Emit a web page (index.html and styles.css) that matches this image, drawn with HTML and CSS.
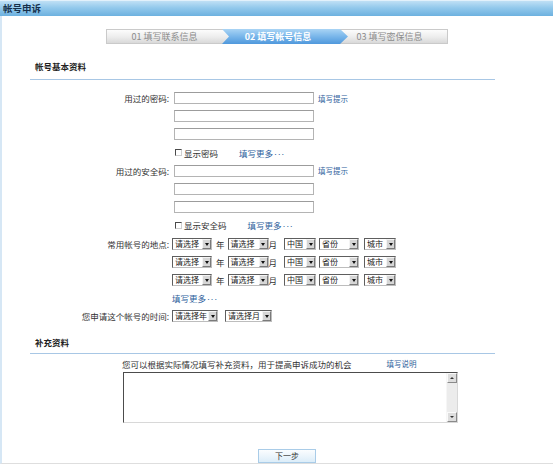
FILE: index.html
```html
<!DOCTYPE html>
<html lang="zh-CN">
<head>
<meta charset="utf-8">
<title>帐号申诉</title>
<link rel="stylesheet" href="styles.css">
</head>
<body>
<div class="page">
  <div class="hd">帐号申诉</div>
  <div class="main">
    <div class="steps">
      <div class="step s1">01 填写联系信息</div>
      <div class="step s2">02 填写帐号信息</div>
      <div class="step s3">03 填写密保信息</div>
    </div>

    <div class="sec">帐号基本资料</div>
    <div class="form">
      <div class="row"><span class="lbl">用过的密码:</span><span class="inp"></span><a class="tip">填写提示</a></div>
      <div class="row"><span class="lbl"></span><span class="inp"></span></div>
      <div class="row"><span class="lbl"></span><span class="inp"></span></div>
      <div class="row"><span class="lbl"></span><span class="chk"></span><span class="chk-text">显示密码</span><a class="more">填写更多<span class="dots">···</span></a></div>

      <div class="row"><span class="lbl">用过的安全码:</span><span class="inp"></span><a class="tip">填写提示</a></div>
      <div class="row"><span class="lbl"></span><span class="inp"></span></div>
      <div class="row"><span class="lbl"></span><span class="inp"></span></div>
      <div class="row"><span class="lbl"></span><span class="chk"></span><span class="chk-text">显示安全码</span><a class="more">填写更多<span class="dots">···</span></a></div>

      <div class="row"><span class="lbl">常用帐号的地点:</span>
        <span class="sel w40">请选择<i class="btn"></i></span><span class="unit u-year">年</span>
        <span class="sel w41">请选择<i class="btn"></i></span><span class="unit u-month">月</span>
        <span class="sel w32 g-country">中国<i class="btn"></i></span>
        <span class="sel w40 g-prov">省份<i class="btn"></i></span>
        <span class="sel w32 g-city">城市<i class="btn"></i></span>
      </div>
      <div class="row"><span class="lbl"></span>
        <span class="sel w40">请选择<i class="btn"></i></span><span class="unit u-year">年</span>
        <span class="sel w41">请选择<i class="btn"></i></span><span class="unit u-month">月</span>
        <span class="sel w32 g-country">中国<i class="btn"></i></span>
        <span class="sel w40 g-prov">省份<i class="btn"></i></span>
        <span class="sel w32 g-city">城市<i class="btn"></i></span>
      </div>
      <div class="row"><span class="lbl"></span>
        <span class="sel w40">请选择<i class="btn"></i></span><span class="unit u-year">年</span>
        <span class="sel w41">请选择<i class="btn"></i></span><span class="unit u-month">月</span>
        <span class="sel w32 g-country">中国<i class="btn"></i></span>
        <span class="sel w40 g-prov">省份<i class="btn"></i></span>
        <span class="sel w32 g-city">城市<i class="btn"></i></span>
      </div>
      <div class="row"><span class="lbl"></span><a class="more more-loc">填写更多<span class="dots">···</span></a></div>

      <div class="row"><span class="lbl">您申请这个帐号的时间:</span>
        <span class="sel w46">请选择年<i class="btn"></i></span>
        <span class="sel w47 g-tm">请选择月<i class="btn"></i></span>
      </div>
    </div>

    <div class="sec sec2">补充资料</div>
    <div class="supp">
      <div class="supp-line"><span>您可以根据实际情况填写补充资料，用于提高申诉成功的机会</span><a class="tip tip-supp">填写说明</a></div>
      <div class="ta">
        <textarea class="ta-input"></textarea>
        <div class="sb">
          <span class="sb-btn up"></span>
          <span class="sb-btn down"></span>
        </div>
      </div>
    </div>

    <div class="actions"><button class="next">下一步</button></div>
  </div>
</div>
</body>
</html>
```
FILE: styles.css
```css
html, body {
  margin: 0;
  padding: 0;
  background: #fff;
}
body {
  font-family: "Noto Sans CJK SC", "Noto Sans", sans-serif;
  font-size: 8.5px;
  color: #333;
}
.page {
  width: 553px;
  height: 465px;
  overflow: hidden;
  background: #fff;
}
.hd {
  height: 16px;
  box-sizing: border-box;
  border-top: 1px solid #e2f1fb;
  background: linear-gradient(#bfe0f5, #93c9ec 45%, #6db1df);
  font-weight: bold;
  font-size: 9.5px;
  line-height: 14px;
  padding-left: 3px;
  color: #16304b;
}
.main {
  height: 448px;
  box-sizing: border-box;
  border-left: 2px solid #d6e7f5;
  border-bottom: 1px solid #dedede;
  padding-top: 13px;
}

/* steps */
.steps {
  display: flex;
  width: 342px;
  height: 15px;
  margin-left: 104px;
  box-sizing: border-box;
  border: 1px solid #cacaca;
  background: linear-gradient(#fcfcfc, #ececec 55%, #d9d9d9);
  font-size: 9px;
  line-height: 13px;
  color: #8c8c8c;
  white-space: nowrap;
}
.step {
  text-align: center;
}
.s1 {
  flex: 0 0 115px;
}
.s2 {
  flex: 0 0 126px;
  margin: -1px -8px -1px 0;
  height: 15px;
  line-height: 15px;
  padding-right: 14px;
  box-sizing: border-box;
  position: relative;
  z-index: 1;
  background: linear-gradient(#a9d4f5, #79b6ea 50%, #4f98dc);
  color: #fff;
  font-weight: bold;
  clip-path: polygon(0 0, calc(100% - 8px) 0, 100% 50%, calc(100% - 8px) 100%, 0 100%, 7px 50%);
}
.s3 {
  flex: 1;
  padding-right: 8px;
}

/* sections */
.sec {
  margin: 15px 58px 0 28px;
  padding-left: 5px;
  line-height: 14px;
  padding-bottom: 6px;
  border-bottom: 1px solid #a8c7e5;
  font-weight: bold;
  color: #222;
}
.sec2 {
  margin-top: 9.5px;
  padding-bottom: 4px;
}

/* form */
.form {
  margin-top: 9px;
}
.row {
  display: flex;
  align-items: center;
  height: 18.2px;
  white-space: nowrap;
}
.lbl {
  flex: 0 0 170px;
  box-sizing: border-box;
  padding-right: 3px;
  text-align: right;
  color: #333;
}
.inp {
  display: block;
  width: 140px;
  height: 12px;
  box-sizing: border-box;
  margin-left: 2px;
  border: 1px solid #b4b4b4;
  border-top-color: #9c9c9c;
  background: #fff;
}
a {
  color: #2d5e9b;
  text-decoration: none;
}
.tip {
  margin-left: 4px;
  font-size: 7.5px;
}
.chk {
  display: block;
  width: 7px;
  height: 7px;
  box-sizing: border-box;
  margin-left: 3px;
  border: 1px solid;
  border-color: #4a4a4a #d0d0d0 #d0d0d0 #4a4a4a;
  background: #fff;
}
.chk-text {
  margin-left: 2px;
}
.more {
  margin-left: 21px;
}
.more-loc {
  margin-left: 0;
}
.dots {
  font-family: "Liberation Sans", sans-serif;
  font-size: 9px;
  letter-spacing: 0.6px;
  margin-left: 1px;
}

/* selects */
.sel {
  display: flex;
  align-items: center;
  justify-content: space-between;
  height: 12px;
  box-sizing: border-box;
  padding-left: 2px;
  border: 1px solid;
  border-color: #5e5e5e #bdbdbd #bdbdbd #5e5e5e;
  background: #fff;
  font-size: 8px;
  line-height: 10px;
  color: #222;
}
.btn {
  display: block;
  position: relative;
  width: 9px;
  height: 10px;
  box-sizing: border-box;
  border: 1px solid;
  border-color: #f4f4f4 #7a7a7a #7a7a7a #f4f4f4;
  background: #d6d6d6;
}
.btn::after {
  content: "";
  position: absolute;
  left: 1.5px;
  top: 3px;
  border-left: 2.5px solid transparent;
  border-right: 2.5px solid transparent;
  border-top: 3px solid #111;
}
.w40 { width: 40px; }
.w41 { width: 41px; }
.w32 { width: 32px; }
.w46 { width: 46px; }
.w47 { width: 47px; }
.unit {
  color: #333;
}
.u-year {
  margin: 0 3px 0 4px;
}
.u-month {
  margin-right: 7px;
}
.g-prov { margin-left: 3px; }
.g-city { margin-left: 5px; }
.g-tm { margin-left: 7px; }

/* supplementary */
.supp {
  margin-top: 5px;
  padding-left: 120px;
}
.supp-line {
  display: flex;
  align-items: center;
  height: 10px;
  white-space: nowrap;
}
.tip-supp {
  margin-left: 35px;
}
.ta {
  display: flex;
  width: 335px;
  height: 51px;
  box-sizing: border-box;
  margin: 3px 0 0 1px;
  border: 1px solid;
  border-color: #4c4c4c #d8d8d8 #d8d8d8 #4c4c4c;
  background: #fff;
}
.ta-input {
  flex: 1;
  border: none;
  outline: none;
  resize: none;
  margin: 0;
  padding: 0;
  background: #fff;
}
.sb {
  width: 10px;
  display: flex;
  flex-direction: column;
  justify-content: space-between;
  background: #ececec;
  border-left: 1px solid #f6f6f6;
}
.sb-btn {
  display: block;
  position: relative;
  height: 10px;
  box-sizing: border-box;
  border: 1px solid;
  border-color: #fafafa #8a8a8a #8a8a8a #fafafa;
  background: #dedede;
}
.sb-btn::after {
  content: "";
  position: absolute;
  left: 2px;
  top: 3px;
  border-left: 2px solid transparent;
  border-right: 2px solid transparent;
}
.up::after {
  border-bottom: 2px solid #333;
}
.down::after {
  border-top: 2px solid #333;
}

/* actions */
.actions {
  margin-top: 26px;
  padding-left: 256px;
}
.next {
  display: block;
  width: 58px;
  height: 14px;
  box-sizing: border-box;
  margin: 0;
  padding: 0;
  border: 1px solid #a9cce8;
  background: linear-gradient(#fbfdff, #dcedf9);
  font-family: "Noto Sans CJK SC", sans-serif;
  font-size: 8px;
  line-height: 12px;
  color: #333;
}
```
